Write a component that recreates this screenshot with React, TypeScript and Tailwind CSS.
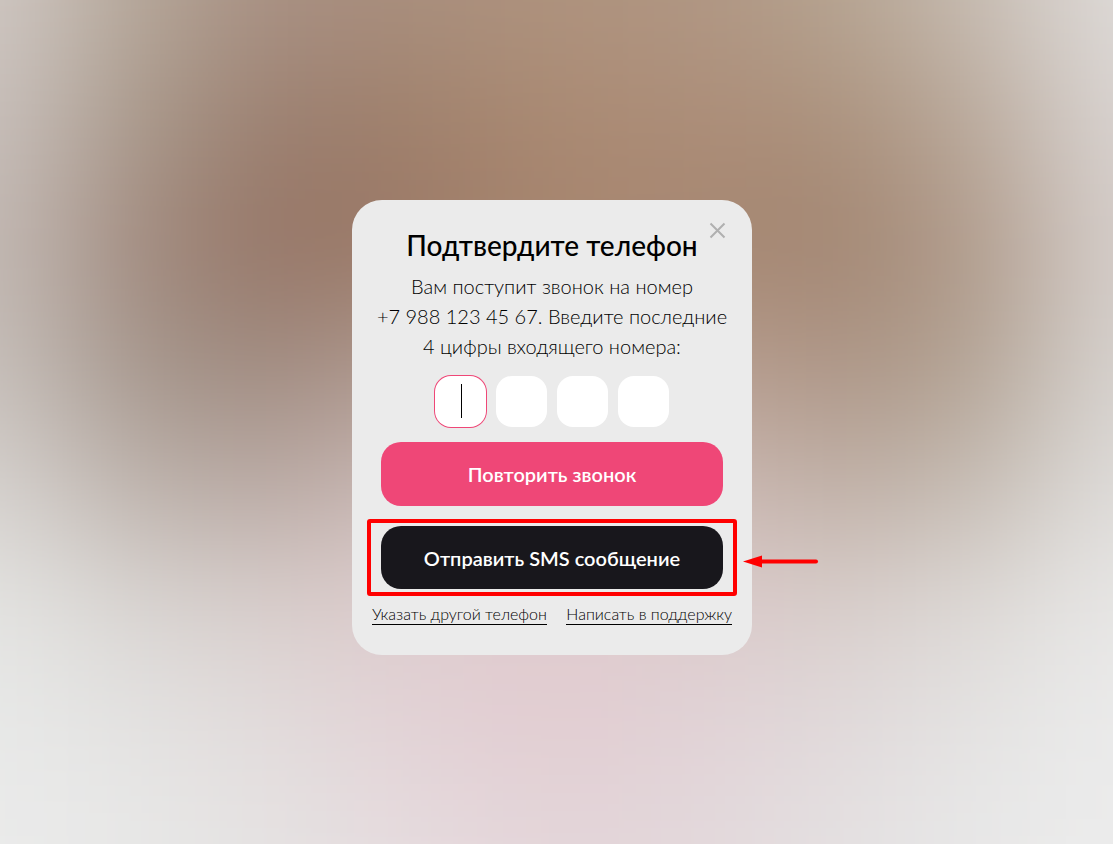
import { useState } from 'react';

const CODE_LENGTH = 4;

// 背景のぼかしに使う色（上から下、左から右）
const backdropColors = [
    ['#d0c9c5', '#b4a698', '#a88f82', '#a98f7d', '#af937e', '#b09683', '#b5a390', '#c6bbb1', '#dfdcda'],
    ['#c9c1bd', '#a8988a', '#9a7e6f', '#a0816c', '#aa8a73', '#ac8d78', '#ab917c', '#b9a99b', '#dad5d3'],
    ['#c3bab5', '#a18a7e', '#957465', '#9c7966', '#a6846d', '#a68671', '#a28571', '#b09b8b', '#d6cfcc'],
    ['#c7c0bb', '#a3948a', '#9f897e', '#b09a90', '#b8a298', '#b89e90', '#ac9484', '#b1a192', '#d8d4d1'],
    ['#d6d2cf', '#bbb0a9', '#b8a8a2', '#cbb9b6', '#d3c2c1', '#cdbab5', '#beaea4', '#c4bab1', '#dfdddb'],
    ['#e4e4e2', '#d8d4d1', '#d8cdcb', '#deccce', '#e0cbcf', '#dccbcb', '#d8cdca', '#dcd8d5', '#e8e7e6'],
    ['#e8e9e8', '#e3e2e1', '#e2dbdb', '#e2d1d5', '#e2ccd1', '#e1d2d6', '#e0d9da', '#e4e3e2', '#ebebeb'],
    ['#ebebeb', '#e8e8e7', '#e5e2e2', '#e6dbde', '#e3d5d9', '#e3d8db', '#e4e0e1', '#e8e8e8', '#ececec'],
];

function Backdrop() {
    const rows = backdropColors.length;
    const cols = backdropColors[0].length;
    const cells = [];

    // 端が透けないように外側へ2マス分広げる
    for (let r = -2; r < rows + 2; r++) {
        for (let c = -2; c < cols + 2; c++) {
            const row = Math.min(Math.max(r, 0), rows - 1);
            const col = Math.min(Math.max(c, 0), cols - 1);
            cells.push(
                <rect key={`${r}:${c}`} x={c * 100 - 50} y={r * 100 - 50} width="101" height="101" fill={backdropColors[row][col]} />
            );
        }
    }

    return (
        <svg
            className="absolute inset-0 h-full w-full"
            viewBox={`0 0 ${(cols - 1) * 100} ${(rows - 1) * 100}`}
            preserveAspectRatio="none"
            aria-hidden="true"
        >
            <defs>
                <filter id="soft" filterUnits="userSpaceOnUse" x="-250" y="-250" width="1300" height="1200" colorInterpolationFilters="sRGB">
                    <feGaussianBlur stdDeviation="48" />
                </filter>
            </defs>
            <g filter="url(#soft)">{cells}</g>
        </svg>
    );
}

function CodeInputs() {
    const [code, setCode] = useState<string[]>(Array(CODE_LENGTH).fill(''));
    const [active, setActive] = useState(0);

    const handleChange = (index: number, value: string) => {
        setCode(code.map((digit, i) => (i === index ? value.replace(/\D/g, '') : digit)));
    };

    return (
        <div className="mt-[15px] flex justify-center gap-[10px]">
            {code.map((digit, index) => (
                <div key={index} className="relative">
                    <input
                        type="text"
                        inputMode="numeric"
                        maxLength={1}
                        aria-label={`Цифра ${index + 1}`}
                        value={digit}
                        onFocus={() => setActive(index)}
                        onChange={e => handleChange(index, e.target.value)}
                        className={`block size-[51px] rounded-2xl bg-white text-center text-3xl caret-transparent outline-none ${
                            active === index ? 'ring-1 ring-[#ef4777]' : ''
                        }`}
                    />
                    {active === index && !digit && (
                        <span className="pointer-events-none absolute top-2 left-[26px] h-[34px] w-px bg-black" />
                    )}
                </div>
            ))}
        </div>
    );
}

export default function App() {
    return (
        <div className="relative flex min-h-screen items-center justify-center overflow-hidden bg-[#d8cdca] pt-[11px] pr-[9px] font-['Lato','Open_Sans',sans-serif] text-black">
            <Backdrop />

            <div role="dialog" aria-labelledby="title" className="relative w-[400px] rounded-[30px] bg-[#ebebeb] px-5 pt-[27px] pb-[30px]">
                <button type="button" aria-label="Закрыть" className="absolute top-[22px] right-[26px]">
                    <svg className="size-[17px]" viewBox="0 0 17 17" fill="none" stroke="#b0b0b0" strokeWidth="2">
                        <path d="M1.5 1.5l14 14M15.5 1.5l-14 14" />
                    </svg>
                </button>

                <h1 id="title" className="text-center text-[28px] leading-9 font-medium">
                    Подтвердите телефон
                </h1>
                <p className="mt-2 text-center text-xl leading-[30px] font-light">
                    Вам поступит звонок на номер
                    <br />
                    +7 988 123 45 67. Введите последние
                    <br />
                    4 цифры входящего номера:
                </p>

                <CodeInputs />

                <div className="mx-[9px] mt-[15px] flex flex-col gap-5">
                    <button type="button" className="h-16 rounded-[20px] bg-[#ef4777] text-xl font-semibold text-white">
                        Повторить звонок
                    </button>
                    <div className="relative">
                        <button type="button" className="h-[63px] w-full rounded-[20px] bg-[#18171c] text-xl font-semibold text-white">
                            Отправить SMS сообщение
                        </button>
                        <span className="pointer-events-none absolute -inset-x-[14px] -inset-y-[7px] rounded-[3px] border-4 border-[#ff0000]" />
                        <svg className="pointer-events-none absolute top-[28px] left-full ml-5 h-4 w-20" viewBox="0 0 80 16" aria-hidden="true">
                            <path d="M18 7.5H73" stroke="#ff0000" strokeWidth="4" strokeLinecap="round" />
                            <path d="M0 7.5L19 1.5V13.5Z" fill="#ff0000" />
                        </svg>
                    </div>
                </div>

                <div className="mt-[15px] flex justify-between text-base leading-5 font-light">
                    <a href="#phone" className="border-b border-black">
                        Указать другой телефон
                    </a>
                    <a href="#support" className="border-b border-black">
                        Написать в поддержку
                    </a>
                </div>
            </div>
        </div>
    );
}
